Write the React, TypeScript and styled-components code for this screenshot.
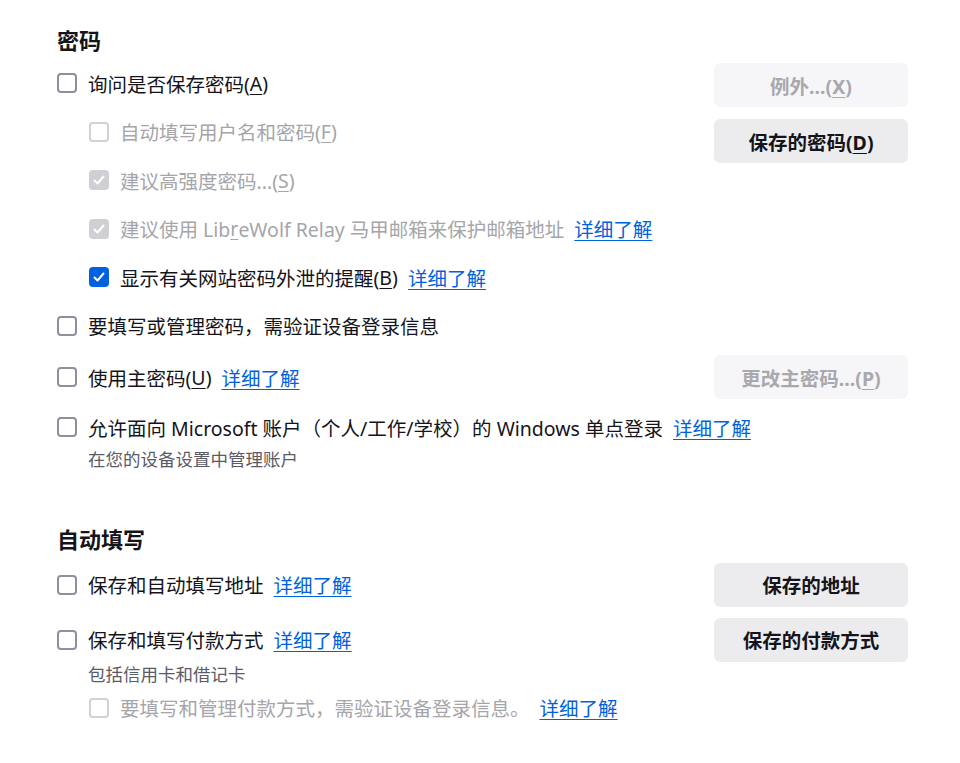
import React from 'react';
import styled, { createGlobalStyle } from 'styled-components';

const GlobalStyle = createGlobalStyle`
  html, body {
    margin: 0;
    padding: 0;
    background: #ffffff;
  }
  body {
    font-family: 'Noto Sans', 'Noto Sans CJK SC', sans-serif;
    color: #15141a;
  }
`;

const Page = styled.div`
  width: 960px;
  box-sizing: border-box;
  padding: 22px 52px 0 57px;
`;

const Heading = styled.h2<{ $top?: number }>`
  margin: ${(p) => p.$top ?? 0}px 0 0 0;
  height: 37px;
  line-height: 37px;
  font-size: 22px;
  font-weight: 700;
`;

const Block = styled.div<{ $top?: number }>`
  display: flex;
  justify-content: space-between;
  align-items: flex-start;
  margin-top: ${(p) => p.$top ?? 0}px;
`;

const Column = styled.div`
  display: flex;
  flex-direction: column;
`;

const ButtonColumn = styled.div`
  display: flex;
  flex-direction: column;
  gap: 12px;
  margin-top: 4px;
`;

const Row = styled.div<{ $h?: number; $indent?: boolean; $dim?: boolean }>`
  display: flex;
  align-items: center;
  height: ${(p) => p.$h ?? 48.5}px;
  padding-left: ${(p) => (p.$indent ? 32 : 0)}px;
  font-size: 19.5px;
  color: ${(p) => (p.$dim ? '#a5a5aa' : '#15141a')};
  white-space: nowrap;
`;

const Box = styled.span<{ $checked?: boolean; $disabled?: boolean }>`
  box-sizing: border-box;
  flex: none;
  width: 20px;
  height: 20px;
  margin-right: 11px;
  border-radius: 4px;
  display: flex;
  align-items: center;
  justify-content: center;
  border: ${(p) =>
    p.$checked ? 'none' : `2px solid ${p.$disabled ? '#d2d2d6' : '#8f8f9d'}`};
  background: ${(p) =>
    p.$checked ? (p.$disabled ? '#cfcfd4' : '#0061e0') : '#ffffff'};
`;

const AccessKey = styled.u`
  text-decoration-thickness: 1px;
  text-underline-offset: 3px;
`;

const Link = styled.a`
  margin-left: 10px;
  color: #0061e0;
  text-decoration: underline;
  text-underline-offset: 3px;
  cursor: pointer;
`;

const Note = styled.div<{ $top?: number }>`
  margin-top: ${(p) => p.$top ?? 0}px;
  padding-left: 31px;
  font-size: 17.5px;
  line-height: 20px;
  color: #5b5b66;
`;

const Button = styled.button<{ $disabled?: boolean }>`
  width: 194px;
  height: 44px;
  border: none;
  border-radius: 6px;
  font-family: 'Noto Sans', 'Noto Sans CJK SC', sans-serif;
  font-size: 19.5px;
  font-weight: 700;
  background: ${(p) => (p.$disabled ? '#f6f6f8' : '#ececef')};
  color: ${(p) => (p.$disabled ? '#a8a8ae' : '#15141a')};
  padding: 0;
`;

function Check({ checked, disabled }: { checked?: boolean; disabled?: boolean }) {
  return (
    <Box $checked={checked} $disabled={disabled}>
      {checked && (
        <svg width="14" height="14" viewBox="0 0 14 14">
          <polyline
            points="2.5,7.5 5.5,10.5 11.5,3.5"
            fill="none"
            stroke="#ffffff"
            strokeWidth="2"
            strokeLinecap="round"
            strokeLinejoin="round"
          />
        </svg>
      )}
    </Box>
  );
}

export default function App() {
  return (
    <Page>
      <GlobalStyle />
      <Heading>密码</Heading>
      <Block>
        <Column>
          <Row>
            <Check />
            询问是否保存密码(<AccessKey>A</AccessKey>)
          </Row>
          <Row $indent $dim>
            <Check disabled />
            自动填写用户名和密码(<AccessKey>F</AccessKey>)
          </Row>
          <Row $indent $dim>
            <Check checked disabled />
            建议高强度密码...(<AccessKey>S</AccessKey>)
          </Row>
          <Row $indent $dim>
            <Check checked disabled />
            建议使用 Lib<AccessKey>r</AccessKey>eWolf Relay 马甲邮箱来保护邮箱地址
            <Link>详细了解</Link>
          </Row>
          <Row $indent>
            <Check checked />
            显示有关网站密码外泄的提醒(<AccessKey>B</AccessKey>)
            <Link>详细了解</Link>
          </Row>
        </Column>
        <ButtonColumn>
          <Button $disabled>
            例外...(<AccessKey>X</AccessKey>)
          </Button>
          <Button>
            保存的密码(<AccessKey>D</AccessKey>)
          </Button>
        </ButtonColumn>
      </Block>
      <Row>
        <Check />
        要填写或管理密码，需验证设备登录信息
      </Row>
      <Block $top={5}>
        <Row $h={44}>
          <Check />
          使用主密码(<AccessKey>U</AccessKey>)
          <Link>详细了解</Link>
        </Row>
        <Button $disabled>
          更改主密码...(<AccessKey>P</AccessKey>)
        </Button>
      </Block>
      <Column>
        <Row $h={44} style={{ marginTop: 6 }}>
          <Check />
          允许面向 Microsoft 账户（个人/工作/学校）的 Windows 单点登录
          <Link>详细了解</Link>
        </Row>
        <Note>在您的设备设置中管理账户</Note>
      </Column>

      <Heading $top={52}>自动填写</Heading>
      <Block $top={4.5}>
        <Row $h={44}>
          <Check />
          保存和自动填写地址
          <Link>详细了解</Link>
        </Row>
        <Button>保存的地址</Button>
      </Block>
      <Block $top={11}>
        <Column>
          <Row $h={44}>
            <Check />
            保存和填写付款方式
            <Link>详细了解</Link>
          </Row>
          <Note $top={2}>包括信用卡和借记卡</Note>
          <Row $indent $dim $h={48}>
            <Check disabled />
            要填写和管理付款方式，需验证设备登录信息。
            <Link>详细了解</Link>
          </Row>
        </Column>
        <Button>保存的付款方式</Button>
      </Block>
    </Page>
  );
}
